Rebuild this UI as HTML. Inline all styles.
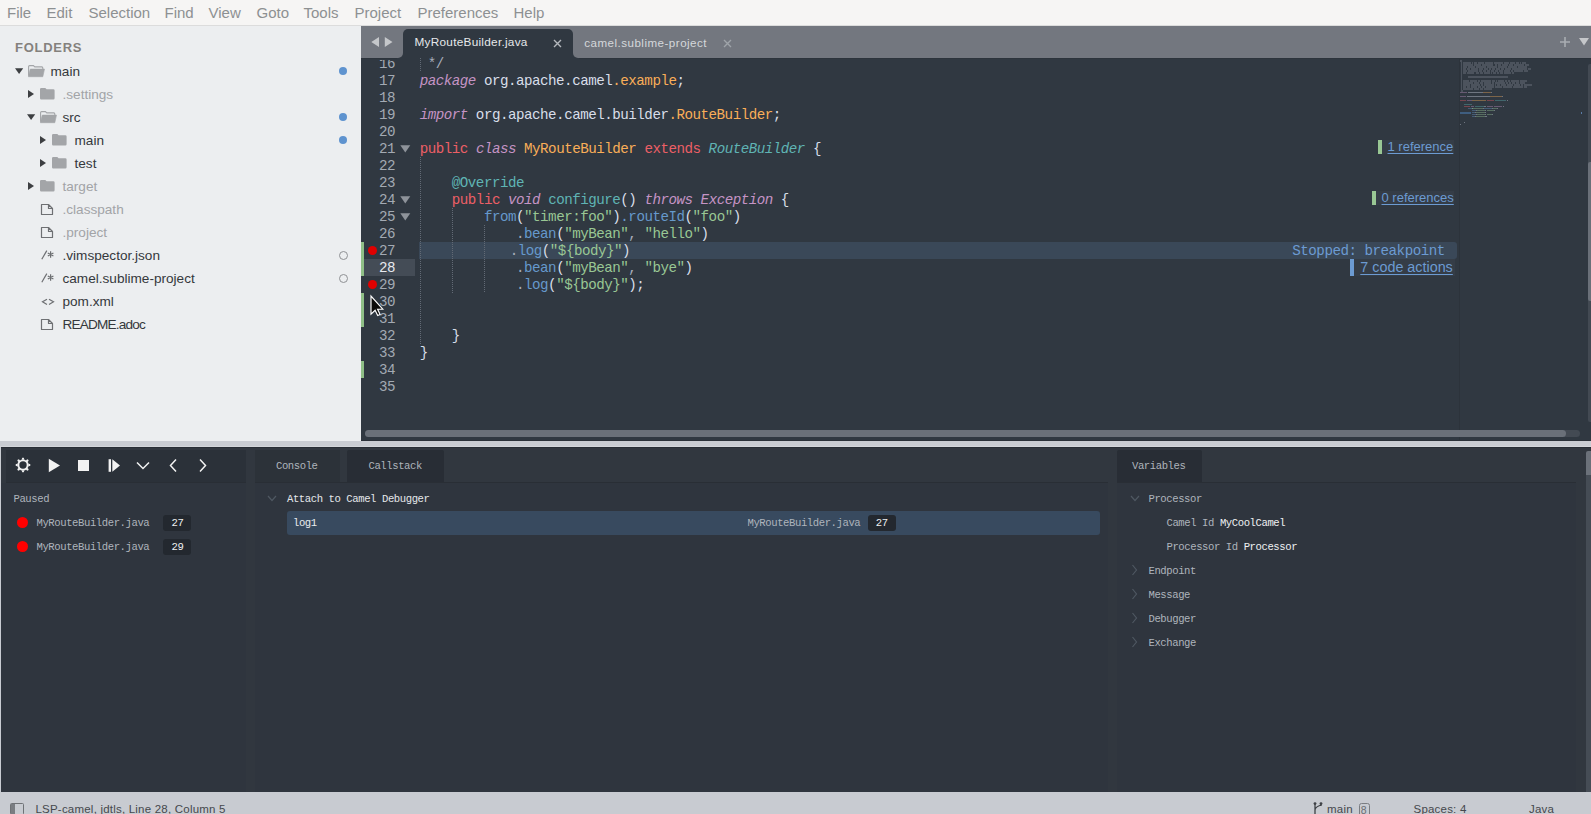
<!DOCTYPE html>
<html><head><meta charset="utf-8">
<style>
*{margin:0;padding:0;box-sizing:border-box}
html,body{width:1591px;height:814px;overflow:hidden;background:#303841;position:relative}
.a{position:absolute}
.s{font-family:"Liberation Sans",sans-serif;white-space:pre}
.m{font-family:"Liberation Mono",monospace;white-space:pre}
.r{color:#ec5f66}.p{color:#c594c5;font-style:italic}.o{color:#f9ae58}.c{color:#5fb4b4}.ci{color:#5fb4b4;font-style:italic}.b{color:#6699cc}.g{color:#99c794}.gr{color:#a6acb9}
</style></head><body>
<div class="a" style="left:0px;top:0px;width:1591px;height:25px;background:#f6f5f4;"></div>
<div class="a" style="left:0px;top:25px;width:1591px;height:1px;background:#dcdcdc;"></div>
<div class="a s" style="left:7px;top:5.10px;font-size:15px;line-height:15px;color:#8d9092;">File</div>
<div class="a s" style="left:46.5px;top:5.10px;font-size:15px;line-height:15px;color:#8d9092;">Edit</div>
<div class="a s" style="left:88.5px;top:5.10px;font-size:15px;line-height:15px;color:#8d9092;">Selection</div>
<div class="a s" style="left:164.5px;top:5.10px;font-size:15px;line-height:15px;color:#8d9092;">Find</div>
<div class="a s" style="left:208.5px;top:5.10px;font-size:15px;line-height:15px;color:#8d9092;">View</div>
<div class="a s" style="left:256.5px;top:5.10px;font-size:15px;line-height:15px;color:#8d9092;">Goto</div>
<div class="a s" style="left:303.5px;top:5.10px;font-size:15px;line-height:15px;color:#8d9092;">Tools</div>
<div class="a s" style="left:354.5px;top:5.10px;font-size:15px;line-height:15px;color:#8d9092;">Project</div>
<div class="a s" style="left:417.5px;top:5.10px;font-size:15px;line-height:15px;color:#8d9092;">Preferences</div>
<div class="a s" style="left:513.5px;top:5.10px;font-size:15px;line-height:15px;color:#8d9092;">Help</div>
<div class="a" style="left:0px;top:26px;width:361px;height:415px;background:#eceef0;"></div>
<div class="a s" style="left:15px;top:41.10px;font-size:13px;line-height:13px;color:#84817d;font-weight:bold;letter-spacing:0.72px">FOLDERS</div>
<svg class="a" style="left:15px;top:67.8px" width="9" height="7" viewBox="0 0 9 7"><path d="M0 0.3H8.2L4.1 6Z" fill="#3d3f42"/></svg>
<svg class="a" style="left:28.2px;top:65.1px" width="18" height="13" viewBox="0 0 18 13"><path d="M0.6 10.8V1.6Q0.6 0.6 1.6 0.6H5.4L6.8 1.9H13.8Q14.8 1.9 14.8 2.9V4.4" fill="none" stroke="#a3a5a8" stroke-width="1.1"/><path d="M2.3 4.1H16.5L14.8 11.7H0.3Z" fill="#a3a5a8" stroke="#a3a5a8" stroke-width="0.6" stroke-linejoin="round"/></svg>
<div class="a s" style="left:50.5px;top:64.69px;font-size:13.6px;line-height:13.6px;color:#35383c;">main</div>
<div class="a" style="left:339px;top:67px;width:8px;height:8px;border-radius:50%;background:#5e93cf"></div>
<svg class="a" style="left:27.9px;top:90px" width="7" height="9" viewBox="0 0 7 9"><path d="M0 0V8.1L6 4.05Z" fill="#3d3f42"/></svg>
<svg class="a" style="left:40.1px;top:88.1px" width="16" height="13" viewBox="0 0 16 13"><path d="M0 1.3Q0 0 1.3 0H5.3L6.6 1.2H13.3Q14.6 1.2 14.6 2.5V10.3Q14.6 11.6 13.3 11.6H1.3Q0 11.6 0 10.3Z" fill="#a3a5a8"/></svg>
<div class="a s" style="left:62.5px;top:87.69px;font-size:13.6px;line-height:13.6px;color:#a2a4a7;">.settings</div>
<svg class="a" style="left:27px;top:113.8px" width="9" height="7" viewBox="0 0 9 7"><path d="M0 0.3H8.2L4.1 6Z" fill="#3d3f42"/></svg>
<svg class="a" style="left:40.2px;top:111.1px" width="18" height="13" viewBox="0 0 18 13"><path d="M0.6 10.8V1.6Q0.6 0.6 1.6 0.6H5.4L6.8 1.9H13.8Q14.8 1.9 14.8 2.9V4.4" fill="none" stroke="#a3a5a8" stroke-width="1.1"/><path d="M2.3 4.1H16.5L14.8 11.7H0.3Z" fill="#a3a5a8" stroke="#a3a5a8" stroke-width="0.6" stroke-linejoin="round"/></svg>
<div class="a s" style="left:62.5px;top:110.69px;font-size:13.6px;line-height:13.6px;color:#35383c;">src</div>
<div class="a" style="left:339px;top:113px;width:8px;height:8px;border-radius:50%;background:#5e93cf"></div>
<svg class="a" style="left:39.9px;top:136px" width="7" height="9" viewBox="0 0 7 9"><path d="M0 0V8.1L6 4.05Z" fill="#3d3f42"/></svg>
<svg class="a" style="left:52.1px;top:134.1px" width="16" height="13" viewBox="0 0 16 13"><path d="M0 1.3Q0 0 1.3 0H5.3L6.6 1.2H13.3Q14.6 1.2 14.6 2.5V10.3Q14.6 11.6 13.3 11.6H1.3Q0 11.6 0 10.3Z" fill="#a3a5a8"/></svg>
<div class="a s" style="left:74.5px;top:133.69px;font-size:13.6px;line-height:13.6px;color:#35383c;">main</div>
<div class="a" style="left:339px;top:136px;width:8px;height:8px;border-radius:50%;background:#5e93cf"></div>
<svg class="a" style="left:39.9px;top:159px" width="7" height="9" viewBox="0 0 7 9"><path d="M0 0V8.1L6 4.05Z" fill="#3d3f42"/></svg>
<svg class="a" style="left:52.1px;top:157.1px" width="16" height="13" viewBox="0 0 16 13"><path d="M0 1.3Q0 0 1.3 0H5.3L6.6 1.2H13.3Q14.6 1.2 14.6 2.5V10.3Q14.6 11.6 13.3 11.6H1.3Q0 11.6 0 10.3Z" fill="#a3a5a8"/></svg>
<div class="a s" style="left:74.5px;top:156.69px;font-size:13.6px;line-height:13.6px;color:#35383c;">test</div>
<svg class="a" style="left:27.9px;top:182px" width="7" height="9" viewBox="0 0 7 9"><path d="M0 0V8.1L6 4.05Z" fill="#3d3f42"/></svg>
<svg class="a" style="left:40.1px;top:180.1px" width="16" height="13" viewBox="0 0 16 13"><path d="M0 1.3Q0 0 1.3 0H5.3L6.6 1.2H13.3Q14.6 1.2 14.6 2.5V10.3Q14.6 11.6 13.3 11.6H1.3Q0 11.6 0 10.3Z" fill="#a3a5a8"/></svg>
<div class="a s" style="left:62.5px;top:179.69px;font-size:13.6px;line-height:13.6px;color:#a2a4a7;">target</div>
<svg class="a" style="left:40px;top:202.5px" width="14" height="13" viewBox="0 0 14 13"><path d="M1.5 1.5H8.5L12.5 5.5V11.5H1.5Z M8.5 1.5V5.5H12.5" fill="none" stroke="#6e7073" stroke-width="1.2" stroke-linejoin="round"/></svg>
<div class="a s" style="left:62.5px;top:202.69px;font-size:13.6px;line-height:13.6px;color:#a2a4a7;">.classpath</div>
<svg class="a" style="left:40px;top:225.5px" width="14" height="13" viewBox="0 0 14 13"><path d="M1.5 1.5H8.5L12.5 5.5V11.5H1.5Z M8.5 1.5V5.5H12.5" fill="none" stroke="#6e7073" stroke-width="1.2" stroke-linejoin="round"/></svg>
<div class="a s" style="left:62.5px;top:225.69px;font-size:13.6px;line-height:13.6px;color:#a2a4a7;">.project</div>
<svg class="a" style="left:40px;top:249px" width="16" height="12" viewBox="0 0 16 12"><path d="M1.8 10.2L6.8 1.6" stroke="#6d6f72" stroke-width="1.2"/><path d="M10.6 2.3V8.7M7.8 3.9L13.4 7.1M7.8 7.1L13.4 3.9" stroke="#6d6f72" stroke-width="1.2"/></svg>
<div class="a s" style="left:62.5px;top:248.69px;font-size:13.6px;line-height:13.6px;color:#35383c;">.vimspector.json</div>
<div class="a" style="left:338.5px;top:250.5px;width:9px;height:9px;border-radius:50%;border:1.2px solid #8f9194"></div>
<svg class="a" style="left:40px;top:272px" width="16" height="12" viewBox="0 0 16 12"><path d="M1.8 10.2L6.8 1.6" stroke="#6d6f72" stroke-width="1.2"/><path d="M10.6 2.3V8.7M7.8 3.9L13.4 7.1M7.8 7.1L13.4 3.9" stroke="#6d6f72" stroke-width="1.2"/></svg>
<div class="a s" style="left:62.5px;top:271.69px;font-size:13.6px;line-height:13.6px;color:#35383c;">camel.sublime-project</div>
<div class="a" style="left:338.5px;top:273.5px;width:9px;height:9px;border-radius:50%;border:1.2px solid #8f9194"></div>
<svg class="a" style="left:40px;top:297px" width="15" height="10" viewBox="0 0 14 10"><path d="M6.5 2.2L2 4.8L6.5 7.4M8.5 2.2L13 4.8L8.5 7.4" fill="none" stroke="#6d6f72" stroke-width="1.2"/></svg>
<div class="a s" style="left:62.5px;top:294.69px;font-size:13.6px;line-height:13.6px;color:#35383c;">pom.xml</div>
<svg class="a" style="left:40px;top:317.5px" width="14" height="13" viewBox="0 0 14 13"><path d="M1.5 1.5H8.5L12.5 5.5V11.5H1.5Z M8.5 1.5V5.5H12.5" fill="none" stroke="#6e7073" stroke-width="1.2" stroke-linejoin="round"/></svg>
<div class="a s" style="left:62.5px;top:317.69px;font-size:13.6px;line-height:13.6px;color:#35383c;letter-spacing:-0.8px">README.adoc</div>
<div class="a" style="left:361px;top:26px;width:1230px;height:32px;background:#73777f;"></div>
<svg class="a" style="left:369px;top:36px" width="26" height="12" viewBox="0 0 26 12"><path d="M10 0.9V11L2.3 5.95Z M15.8 0.9V11L23.5 5.95Z" fill="#c5c7ca"/></svg>
<div class="a" style="left:396px;top:50px;width:7px;height:8px;background:#303841"></div>
<div class="a" style="left:391px;top:45px;width:12px;height:13px;background:#73777f;border-bottom-right-radius:5px"></div>
<div class="a" style="left:573px;top:50px;width:7px;height:8px;background:#303841"></div>
<div class="a" style="left:573px;top:45px;width:12px;height:13px;background:#73777f;border-bottom-left-radius:5px"></div>
<div class="a" style="left:403px;top:29px;width:170px;height:29px;background:#303841;border-radius:5px 5px 0 0"></div>
<div class="a s" style="left:414.5px;top:37.41px;font-size:11.8px;line-height:11.8px;color:#e6e8ea;letter-spacing:0.26px">MyRouteBuilder.java</div>
<svg class="a" style="left:553px;top:39px" width="9" height="9" viewBox="0 0 9 9"><path d="M1 1L8 8M8 1L1 8" stroke="#b4b8bd" stroke-width="1.4"/></svg>
<div class="a s" style="left:584.2px;top:37.18px;font-size:11.6px;line-height:11.6px;color:#d5d8db;letter-spacing:0.48px">camel.sublime-project</div>
<svg class="a" style="left:723px;top:39px" width="9" height="9" viewBox="0 0 9 9"><path d="M1 1L8 8M8 1L1 8" stroke="#9fa4a9" stroke-width="1.4"/></svg>
<svg class="a" style="left:1559px;top:36px" width="32" height="12" viewBox="0 0 32 12"><path d="M1 6H11M6 1V11" stroke="#a9adb2" stroke-width="1.6"/><path d="M20 2H30L25 9.5Z" fill="#c5c7ca"/></svg>
<div class="a" style="left:361px;top:58px;width:1230px;height:383px;background:#303841;"></div>
<div class="a" style="left:364px;top:259px;width:51px;height:17px;background:#444c56;"></div>
<div class="a" style="left:419px;top:242px;width:1038px;height:17px;background:#3a4858;border-radius:0 3px 3px 0"></div>
<div class="a" style="left:361px;top:242px;width:3px;height:34px;background:#8fbf87;"></div>
<div class="a" style="left:361px;top:293px;width:3px;height:34px;background:#8fbf87;"></div>
<div class="a" style="left:361px;top:361px;width:3px;height:17px;background:#8fbf87;"></div>
<div class="a" style="left:420px;top:58px;width:1px;height:14px;background:repeating-linear-gradient(to bottom,#626a75 0 1px,transparent 1px 2px)"></div>
<div class="a" style="left:420px;top:157px;width:1px;height:187px;background:repeating-linear-gradient(to bottom,#626a75 0 1px,transparent 1px 2px)"></div>
<div class="a" style="left:452px;top:208px;width:1px;height:85px;background:repeating-linear-gradient(to bottom,#626a75 0 1px,transparent 1px 2px)"></div>
<div class="a" style="left:484px;top:225px;width:1px;height:68px;background:repeating-linear-gradient(to bottom,#626a75 0 1px,transparent 1px 2px)"></div>
<div class="a m" style="left:363px;top:57.02px;width:32px;text-align:right;font-size:14.2px;line-height:14.2px;letter-spacing:-0.490px;color:#a3aab3">16</div>
<div class="a m" style="left:419.7px;top:57.02px;font-size:14.2px;line-height:14.2px;letter-spacing:-0.490px;color:#d8dee9"><span class="gr"> */</span></div>
<div class="a m" style="left:363px;top:74.02px;width:32px;text-align:right;font-size:14.2px;line-height:14.2px;letter-spacing:-0.490px;color:#a3aab3">17</div>
<div class="a m" style="left:419.7px;top:74.02px;font-size:14.2px;line-height:14.2px;letter-spacing:-0.490px;color:#d8dee9"><span class="p">package</span> org.apache.camel<span class="o">.example</span>;</div>
<div class="a m" style="left:363px;top:91.02px;width:32px;text-align:right;font-size:14.2px;line-height:14.2px;letter-spacing:-0.490px;color:#a3aab3">18</div>
<div class="a m" style="left:363px;top:108.02px;width:32px;text-align:right;font-size:14.2px;line-height:14.2px;letter-spacing:-0.490px;color:#a3aab3">19</div>
<div class="a m" style="left:419.7px;top:108.02px;font-size:14.2px;line-height:14.2px;letter-spacing:-0.490px;color:#d8dee9"><span class="p">import</span> org.apache.camel.builder<span class="o">.RouteBuilder</span>;</div>
<div class="a m" style="left:363px;top:125.02px;width:32px;text-align:right;font-size:14.2px;line-height:14.2px;letter-spacing:-0.490px;color:#a3aab3">20</div>
<div class="a m" style="left:363px;top:142.02px;width:32px;text-align:right;font-size:14.2px;line-height:14.2px;letter-spacing:-0.490px;color:#a3aab3">21</div>
<div class="a m" style="left:419.7px;top:142.02px;font-size:14.2px;line-height:14.2px;letter-spacing:-0.490px;color:#d8dee9"><span class="r">public</span> <span class="p">class</span> <span class="o">MyRouteBuilder</span> <span class="r">extends</span> <span class="ci">RouteBuilder</span> {</div>
<div class="a m" style="left:363px;top:159.02px;width:32px;text-align:right;font-size:14.2px;line-height:14.2px;letter-spacing:-0.490px;color:#a3aab3">22</div>
<div class="a m" style="left:363px;top:176.02px;width:32px;text-align:right;font-size:14.2px;line-height:14.2px;letter-spacing:-0.490px;color:#a3aab3">23</div>
<div class="a m" style="left:419.7px;top:176.02px;font-size:14.2px;line-height:14.2px;letter-spacing:-0.490px;color:#d8dee9">    <span class="c">@Override</span></div>
<div class="a m" style="left:363px;top:193.02px;width:32px;text-align:right;font-size:14.2px;line-height:14.2px;letter-spacing:-0.490px;color:#a3aab3">24</div>
<div class="a m" style="left:419.7px;top:193.02px;font-size:14.2px;line-height:14.2px;letter-spacing:-0.490px;color:#d8dee9">    <span class="r">public</span> <span class="p">void</span> <span class="c">configure</span>() <span class="p">throws</span> <span class="p">Exception</span> {</div>
<div class="a m" style="left:363px;top:210.02px;width:32px;text-align:right;font-size:14.2px;line-height:14.2px;letter-spacing:-0.490px;color:#a3aab3">25</div>
<div class="a m" style="left:419.7px;top:210.02px;font-size:14.2px;line-height:14.2px;letter-spacing:-0.490px;color:#d8dee9">        <span class="b">from</span>(<span class="g">"timer:foo"</span>)<span class="b">.routeId</span>(<span class="g">"foo"</span>)</div>
<div class="a m" style="left:363px;top:227.02px;width:32px;text-align:right;font-size:14.2px;line-height:14.2px;letter-spacing:-0.490px;color:#a3aab3">26</div>
<div class="a m" style="left:419.7px;top:227.02px;font-size:14.2px;line-height:14.2px;letter-spacing:-0.490px;color:#d8dee9">            <span class="gr">.</span><span class="b">bean</span>(<span class="g">"myBean"</span><span class="gr">,</span> <span class="g">"hello"</span>)</div>
<div class="a m" style="left:363px;top:244.02px;width:32px;text-align:right;font-size:14.2px;line-height:14.2px;letter-spacing:-0.490px;color:#a3aab3">27</div>
<div class="a m" style="left:509.7px;top:244.02px;font-size:14.2px;line-height:14.2px;letter-spacing:-0.490px;color:#d8dee9"><span class="gr">.</span><span class="b">log</span>(<span class="g">"${body}"</span>)</div>
<div class="a m" style="left:363px;top:261.02px;width:32px;text-align:right;font-size:14.2px;line-height:14.2px;letter-spacing:-0.490px;color:#e6e9ee">28</div>
<div class="a m" style="left:419.7px;top:261.02px;font-size:14.2px;line-height:14.2px;letter-spacing:-0.490px;color:#d8dee9">            <span class="gr">.</span><span class="b">bean</span>(<span class="g">"myBean"</span><span class="gr">,</span> <span class="g">"bye"</span>)</div>
<div class="a m" style="left:363px;top:278.02px;width:32px;text-align:right;font-size:14.2px;line-height:14.2px;letter-spacing:-0.490px;color:#a3aab3">29</div>
<div class="a m" style="left:419.7px;top:278.02px;font-size:14.2px;line-height:14.2px;letter-spacing:-0.490px;color:#d8dee9">            <span class="gr">.</span><span class="b">log</span>(<span class="g">"${body}"</span>);</div>
<div class="a m" style="left:363px;top:295.02px;width:32px;text-align:right;font-size:14.2px;line-height:14.2px;letter-spacing:-0.490px;color:#a3aab3">30</div>
<div class="a m" style="left:363px;top:312.02px;width:32px;text-align:right;font-size:14.2px;line-height:14.2px;letter-spacing:-0.490px;color:#a3aab3">31</div>
<div class="a m" style="left:363px;top:329.02px;width:32px;text-align:right;font-size:14.2px;line-height:14.2px;letter-spacing:-0.490px;color:#a3aab3">32</div>
<div class="a m" style="left:419.7px;top:329.02px;font-size:14.2px;line-height:14.2px;letter-spacing:-0.490px;color:#d8dee9">    }</div>
<div class="a m" style="left:363px;top:346.02px;width:32px;text-align:right;font-size:14.2px;line-height:14.2px;letter-spacing:-0.490px;color:#a3aab3">33</div>
<div class="a m" style="left:419.7px;top:346.02px;font-size:14.2px;line-height:14.2px;letter-spacing:-0.490px;color:#d8dee9">}</div>
<div class="a m" style="left:363px;top:363.02px;width:32px;text-align:right;font-size:14.2px;line-height:14.2px;letter-spacing:-0.490px;color:#a3aab3">34</div>
<div class="a m" style="left:363px;top:380.02px;width:32px;text-align:right;font-size:14.2px;line-height:14.2px;letter-spacing:-0.490px;color:#a3aab3">35</div>
<div class="a" style="left:363px;top:58px;width:33px;height:2px;background:#303841;"></div>
<svg class="a" style="left:400px;top:145px" width="11" height="8" viewBox="0 0 11 8"><path d="M0.3 0.3H10.3L5.3 7.5Z" fill="#8e939a"/></svg>
<svg class="a" style="left:400px;top:196px" width="11" height="8" viewBox="0 0 11 8"><path d="M0.3 0.3H10.3L5.3 7.5Z" fill="#8e939a"/></svg>
<svg class="a" style="left:400px;top:213px" width="11" height="8" viewBox="0 0 11 8"><path d="M0.3 0.3H10.3L5.3 7.5Z" fill="#8e939a"/></svg>
<div class="a" style="left:367.8px;top:246.0px;width:9px;height:9px;border-radius:50%;background:#e00000"></div>
<div class="a" style="left:367.8px;top:280.0px;width:9px;height:9px;border-radius:50%;background:#e00000"></div>
<div class="a" style="left:1382px;top:140px;width:72px;height:14px;background:#353d47;"></div>
<div class="a" style="left:1378px;top:140px;width:4px;height:14px;background:#99c794;"></div>
<div class="a s" style="left:1387.5px;top:139.60px;font-size:13px;line-height:13px;color:#6c9bd2;text-decoration:underline;text-underline-offset:1.5px">1 reference</div>
<div class="a" style="left:1376px;top:191px;width:78px;height:14px;background:#353d47;"></div>
<div class="a" style="left:1372px;top:191px;width:4px;height:14px;background:#99c794;"></div>
<div class="a s" style="left:1381.5px;top:190.60px;font-size:13px;line-height:13px;color:#6c9bd2;text-decoration:underline;text-underline-offset:1.5px">0 references</div>
<div class="a m" style="left:1292.3px;top:243.92px;font-size:14.2px;line-height:14.2px;color:#6c9bd2;letter-spacing:-0.490px">Stopped: breakpoint</div>
<div class="a" style="left:1354px;top:259px;width:101px;height:17px;background:#353d47;"></div>
<div class="a" style="left:1350px;top:259px;width:4px;height:17px;background:#6c9bd2;"></div>
<div class="a s" style="left:1360.3px;top:260.15px;font-size:14.35px;line-height:14.35px;color:#6c9bd2;text-decoration:underline;text-underline-offset:2px">7 code actions</div>
<div class="a" style="left:1460.00px;top:60.1px;width:1.92px;height:1.5px;background:#a6acb9;opacity:0.24"></div>
<div class="a" style="left:1460.96px;top:62.1px;width:0.96px;height:1.5px;background:#a6acb9;opacity:0.24"></div>
<div class="a" style="left:1462.88px;top:62.1px;width:7.68px;height:1.5px;background:#a6acb9;opacity:0.24"></div>
<div class="a" style="left:1471.52px;top:62.1px;width:1.92px;height:1.5px;background:#a6acb9;opacity:0.24"></div>
<div class="a" style="left:1474.40px;top:62.1px;width:2.88px;height:1.5px;background:#a6acb9;opacity:0.24"></div>
<div class="a" style="left:1478.24px;top:62.1px;width:5.76px;height:1.5px;background:#a6acb9;opacity:0.24"></div>
<div class="a" style="left:1484.96px;top:62.1px;width:7.68px;height:1.5px;background:#a6acb9;opacity:0.24"></div>
<div class="a" style="left:1493.60px;top:62.1px;width:9.60px;height:1.5px;background:#a6acb9;opacity:0.24"></div>
<div class="a" style="left:1504.16px;top:62.1px;width:4.80px;height:1.5px;background:#a6acb9;opacity:0.24"></div>
<div class="a" style="left:1509.92px;top:62.1px;width:4.80px;height:1.5px;background:#a6acb9;opacity:0.24"></div>
<div class="a" style="left:1515.68px;top:62.1px;width:2.88px;height:1.5px;background:#a6acb9;opacity:0.24"></div>
<div class="a" style="left:1519.52px;top:62.1px;width:1.92px;height:1.5px;background:#a6acb9;opacity:0.24"></div>
<div class="a" style="left:1522.40px;top:62.1px;width:3.84px;height:1.5px;background:#a6acb9;opacity:0.24"></div>
<div class="a" style="left:1460.96px;top:64.1px;width:0.96px;height:1.5px;background:#a6acb9;opacity:0.24"></div>
<div class="a" style="left:1462.88px;top:64.1px;width:10.56px;height:1.5px;background:#a6acb9;opacity:0.24"></div>
<div class="a" style="left:1474.40px;top:64.1px;width:6.72px;height:1.5px;background:#a6acb9;opacity:0.24"></div>
<div class="a" style="left:1482.08px;top:64.1px;width:10.56px;height:1.5px;background:#a6acb9;opacity:0.24"></div>
<div class="a" style="left:1494.56px;top:64.1px;width:2.88px;height:1.5px;background:#a6acb9;opacity:0.24"></div>
<div class="a" style="left:1498.40px;top:64.1px;width:2.88px;height:1.5px;background:#a6acb9;opacity:0.24"></div>
<div class="a" style="left:1502.24px;top:64.1px;width:5.76px;height:1.5px;background:#a6acb9;opacity:0.24"></div>
<div class="a" style="left:1508.96px;top:64.1px;width:3.84px;height:1.5px;background:#a6acb9;opacity:0.24"></div>
<div class="a" style="left:1513.76px;top:64.1px;width:10.56px;height:1.5px;background:#a6acb9;opacity:0.24"></div>
<div class="a" style="left:1525.28px;top:64.1px;width:3.84px;height:1.5px;background:#a6acb9;opacity:0.24"></div>
<div class="a" style="left:1460.96px;top:66.1px;width:0.96px;height:1.5px;background:#a6acb9;opacity:0.24"></div>
<div class="a" style="left:1462.88px;top:66.1px;width:3.84px;height:1.5px;background:#a6acb9;opacity:0.24"></div>
<div class="a" style="left:1467.68px;top:66.1px;width:3.84px;height:1.5px;background:#a6acb9;opacity:0.24"></div>
<div class="a" style="left:1472.48px;top:66.1px;width:2.88px;height:1.5px;background:#a6acb9;opacity:0.24"></div>
<div class="a" style="left:1476.32px;top:66.1px;width:9.60px;height:1.5px;background:#a6acb9;opacity:0.24"></div>
<div class="a" style="left:1486.88px;top:66.1px;width:10.56px;height:1.5px;background:#a6acb9;opacity:0.24"></div>
<div class="a" style="left:1498.40px;top:66.1px;width:8.64px;height:1.5px;background:#a6acb9;opacity:0.24"></div>
<div class="a" style="left:1508.00px;top:66.1px;width:8.64px;height:1.5px;background:#a6acb9;opacity:0.24"></div>
<div class="a" style="left:1517.60px;top:66.1px;width:9.60px;height:1.5px;background:#a6acb9;opacity:0.24"></div>
<div class="a" style="left:1460.96px;top:68.1px;width:0.96px;height:1.5px;background:#a6acb9;opacity:0.24"></div>
<div class="a" style="left:1462.88px;top:68.1px;width:2.88px;height:1.5px;background:#a6acb9;opacity:0.24"></div>
<div class="a" style="left:1466.72px;top:68.1px;width:2.88px;height:1.5px;background:#a6acb9;opacity:0.24"></div>
<div class="a" style="left:1470.56px;top:68.1px;width:7.68px;height:1.5px;background:#a6acb9;opacity:0.24"></div>
<div class="a" style="left:1479.20px;top:68.1px;width:3.84px;height:1.5px;background:#a6acb9;opacity:0.24"></div>
<div class="a" style="left:1484.00px;top:68.1px;width:3.84px;height:1.5px;background:#a6acb9;opacity:0.24"></div>
<div class="a" style="left:1488.80px;top:68.1px;width:1.92px;height:1.5px;background:#a6acb9;opacity:0.24"></div>
<div class="a" style="left:1491.68px;top:68.1px;width:2.88px;height:1.5px;background:#a6acb9;opacity:0.24"></div>
<div class="a" style="left:1495.52px;top:68.1px;width:4.80px;height:1.5px;background:#a6acb9;opacity:0.24"></div>
<div class="a" style="left:1501.28px;top:68.1px;width:2.88px;height:1.5px;background:#a6acb9;opacity:0.24"></div>
<div class="a" style="left:1505.12px;top:68.1px;width:5.76px;height:1.5px;background:#a6acb9;opacity:0.24"></div>
<div class="a" style="left:1511.84px;top:68.1px;width:7.68px;height:1.5px;background:#a6acb9;opacity:0.24"></div>
<div class="a" style="left:1520.48px;top:68.1px;width:6.72px;height:1.5px;background:#a6acb9;opacity:0.24"></div>
<div class="a" style="left:1528.16px;top:68.1px;width:2.88px;height:1.5px;background:#a6acb9;opacity:0.24"></div>
<div class="a" style="left:1460.96px;top:70.1px;width:0.96px;height:1.5px;background:#a6acb9;opacity:0.24"></div>
<div class="a" style="left:1462.88px;top:70.1px;width:3.84px;height:1.5px;background:#a6acb9;opacity:0.24"></div>
<div class="a" style="left:1467.68px;top:70.1px;width:10.56px;height:1.5px;background:#a6acb9;opacity:0.24"></div>
<div class="a" style="left:1479.20px;top:70.1px;width:2.88px;height:1.5px;background:#a6acb9;opacity:0.24"></div>
<div class="a" style="left:1483.04px;top:70.1px;width:2.88px;height:1.5px;background:#a6acb9;opacity:0.24"></div>
<div class="a" style="left:1486.88px;top:70.1px;width:2.88px;height:1.5px;background:#a6acb9;opacity:0.24"></div>
<div class="a" style="left:1490.72px;top:70.1px;width:2.88px;height:1.5px;background:#a6acb9;opacity:0.24"></div>
<div class="a" style="left:1494.56px;top:70.1px;width:3.84px;height:1.5px;background:#a6acb9;opacity:0.24"></div>
<div class="a" style="left:1499.36px;top:70.1px;width:3.84px;height:1.5px;background:#a6acb9;opacity:0.24"></div>
<div class="a" style="left:1504.16px;top:70.1px;width:5.76px;height:1.5px;background:#a6acb9;opacity:0.24"></div>
<div class="a" style="left:1510.88px;top:70.1px;width:1.92px;height:1.5px;background:#a6acb9;opacity:0.24"></div>
<div class="a" style="left:1513.76px;top:70.1px;width:9.60px;height:1.5px;background:#a6acb9;opacity:0.24"></div>
<div class="a" style="left:1524.32px;top:70.1px;width:3.84px;height:1.5px;background:#a6acb9;opacity:0.24"></div>
<div class="a" style="left:1460.96px;top:72.1px;width:0.96px;height:1.5px;background:#a6acb9;opacity:0.24"></div>
<div class="a" style="left:1462.88px;top:72.1px;width:2.88px;height:1.5px;background:#a6acb9;opacity:0.24"></div>
<div class="a" style="left:1466.72px;top:72.1px;width:7.68px;height:1.5px;background:#a6acb9;opacity:0.24"></div>
<div class="a" style="left:1476.32px;top:72.1px;width:2.88px;height:1.5px;background:#a6acb9;opacity:0.24"></div>
<div class="a" style="left:1480.16px;top:72.1px;width:2.88px;height:1.5px;background:#a6acb9;opacity:0.24"></div>
<div class="a" style="left:1484.00px;top:72.1px;width:5.76px;height:1.5px;background:#a6acb9;opacity:0.24"></div>
<div class="a" style="left:1490.72px;top:72.1px;width:0.96px;height:1.5px;background:#a6acb9;opacity:0.24"></div>
<div class="a" style="left:1492.64px;top:72.1px;width:3.84px;height:1.5px;background:#a6acb9;opacity:0.24"></div>
<div class="a" style="left:1497.44px;top:72.1px;width:1.92px;height:1.5px;background:#a6acb9;opacity:0.24"></div>
<div class="a" style="left:1500.32px;top:72.1px;width:2.88px;height:1.5px;background:#a6acb9;opacity:0.24"></div>
<div class="a" style="left:1504.16px;top:72.1px;width:6.72px;height:1.5px;background:#a6acb9;opacity:0.24"></div>
<div class="a" style="left:1511.84px;top:72.1px;width:1.92px;height:1.5px;background:#a6acb9;opacity:0.24"></div>
<div class="a" style="left:1460.96px;top:74.1px;width:0.96px;height:1.5px;background:#a6acb9;opacity:0.24"></div>
<div class="a" style="left:1460.96px;top:76.1px;width:0.96px;height:1.5px;background:#a6acb9;opacity:0.24"></div>
<div class="a" style="left:1467.68px;top:76.1px;width:40.32px;height:1.5px;background:#a6acb9;opacity:0.24"></div>
<div class="a" style="left:1460.96px;top:78.1px;width:0.96px;height:1.5px;background:#a6acb9;opacity:0.24"></div>
<div class="a" style="left:1460.96px;top:80.1px;width:0.96px;height:1.5px;background:#a6acb9;opacity:0.24"></div>
<div class="a" style="left:1462.88px;top:80.1px;width:5.76px;height:1.5px;background:#a6acb9;opacity:0.24"></div>
<div class="a" style="left:1469.60px;top:80.1px;width:7.68px;height:1.5px;background:#a6acb9;opacity:0.24"></div>
<div class="a" style="left:1478.24px;top:80.1px;width:1.92px;height:1.5px;background:#a6acb9;opacity:0.24"></div>
<div class="a" style="left:1481.12px;top:80.1px;width:9.60px;height:1.5px;background:#a6acb9;opacity:0.24"></div>
<div class="a" style="left:1491.68px;top:80.1px;width:2.88px;height:1.5px;background:#a6acb9;opacity:0.24"></div>
<div class="a" style="left:1495.52px;top:80.1px;width:1.92px;height:1.5px;background:#a6acb9;opacity:0.24"></div>
<div class="a" style="left:1498.40px;top:80.1px;width:5.76px;height:1.5px;background:#a6acb9;opacity:0.24"></div>
<div class="a" style="left:1505.12px;top:80.1px;width:1.92px;height:1.5px;background:#a6acb9;opacity:0.24"></div>
<div class="a" style="left:1508.00px;top:80.1px;width:1.92px;height:1.5px;background:#a6acb9;opacity:0.24"></div>
<div class="a" style="left:1510.88px;top:80.1px;width:7.68px;height:1.5px;background:#a6acb9;opacity:0.24"></div>
<div class="a" style="left:1519.52px;top:80.1px;width:7.68px;height:1.5px;background:#a6acb9;opacity:0.24"></div>
<div class="a" style="left:1460.96px;top:82.1px;width:0.96px;height:1.5px;background:#a6acb9;opacity:0.24"></div>
<div class="a" style="left:1462.88px;top:82.1px;width:10.56px;height:1.5px;background:#a6acb9;opacity:0.24"></div>
<div class="a" style="left:1474.40px;top:82.1px;width:4.80px;height:1.5px;background:#a6acb9;opacity:0.24"></div>
<div class="a" style="left:1480.16px;top:82.1px;width:2.88px;height:1.5px;background:#a6acb9;opacity:0.24"></div>
<div class="a" style="left:1484.00px;top:82.1px;width:6.72px;height:1.5px;background:#a6acb9;opacity:0.24"></div>
<div class="a" style="left:1491.68px;top:82.1px;width:1.92px;height:1.5px;background:#a6acb9;opacity:0.24"></div>
<div class="a" style="left:1494.56px;top:82.1px;width:10.56px;height:1.5px;background:#a6acb9;opacity:0.24"></div>
<div class="a" style="left:1506.08px;top:82.1px;width:1.92px;height:1.5px;background:#a6acb9;opacity:0.24"></div>
<div class="a" style="left:1508.96px;top:82.1px;width:1.92px;height:1.5px;background:#a6acb9;opacity:0.24"></div>
<div class="a" style="left:1511.84px;top:82.1px;width:2.88px;height:1.5px;background:#a6acb9;opacity:0.24"></div>
<div class="a" style="left:1515.68px;top:82.1px;width:2.88px;height:1.5px;background:#a6acb9;opacity:0.24"></div>
<div class="a" style="left:1519.52px;top:82.1px;width:5.76px;height:1.5px;background:#a6acb9;opacity:0.24"></div>
<div class="a" style="left:1460.96px;top:84.1px;width:0.96px;height:1.5px;background:#a6acb9;opacity:0.24"></div>
<div class="a" style="left:1462.88px;top:84.1px;width:6.72px;height:1.5px;background:#a6acb9;opacity:0.24"></div>
<div class="a" style="left:1470.56px;top:84.1px;width:9.60px;height:1.5px;background:#a6acb9;opacity:0.24"></div>
<div class="a" style="left:1481.12px;top:84.1px;width:1.92px;height:1.5px;background:#a6acb9;opacity:0.24"></div>
<div class="a" style="left:1484.00px;top:84.1px;width:9.60px;height:1.5px;background:#a6acb9;opacity:0.24"></div>
<div class="a" style="left:1494.56px;top:84.1px;width:1.92px;height:1.5px;background:#a6acb9;opacity:0.24"></div>
<div class="a" style="left:1497.44px;top:84.1px;width:2.88px;height:1.5px;background:#a6acb9;opacity:0.24"></div>
<div class="a" style="left:1501.28px;top:84.1px;width:4.80px;height:1.5px;background:#a6acb9;opacity:0.24"></div>
<div class="a" style="left:1507.04px;top:84.1px;width:5.76px;height:1.5px;background:#a6acb9;opacity:0.24"></div>
<div class="a" style="left:1513.76px;top:84.1px;width:6.72px;height:1.5px;background:#a6acb9;opacity:0.24"></div>
<div class="a" style="left:1521.44px;top:84.1px;width:1.92px;height:1.5px;background:#a6acb9;opacity:0.24"></div>
<div class="a" style="left:1524.32px;top:84.1px;width:7.68px;height:1.5px;background:#a6acb9;opacity:0.24"></div>
<div class="a" style="left:1460.96px;top:86.1px;width:0.96px;height:1.5px;background:#a6acb9;opacity:0.24"></div>
<div class="a" style="left:1462.88px;top:86.1px;width:2.88px;height:1.5px;background:#a6acb9;opacity:0.24"></div>
<div class="a" style="left:1466.72px;top:86.1px;width:2.88px;height:1.5px;background:#a6acb9;opacity:0.24"></div>
<div class="a" style="left:1470.56px;top:86.1px;width:6.72px;height:1.5px;background:#a6acb9;opacity:0.24"></div>
<div class="a" style="left:1478.24px;top:86.1px;width:2.88px;height:1.5px;background:#a6acb9;opacity:0.24"></div>
<div class="a" style="left:1482.08px;top:86.1px;width:2.88px;height:1.5px;background:#a6acb9;opacity:0.24"></div>
<div class="a" style="left:1485.92px;top:86.1px;width:7.68px;height:1.5px;background:#a6acb9;opacity:0.24"></div>
<div class="a" style="left:1494.56px;top:86.1px;width:7.68px;height:1.5px;background:#a6acb9;opacity:0.24"></div>
<div class="a" style="left:1503.20px;top:86.1px;width:8.64px;height:1.5px;background:#a6acb9;opacity:0.24"></div>
<div class="a" style="left:1512.80px;top:86.1px;width:10.56px;height:1.5px;background:#a6acb9;opacity:0.24"></div>
<div class="a" style="left:1524.32px;top:86.1px;width:2.88px;height:1.5px;background:#a6acb9;opacity:0.24"></div>
<div class="a" style="left:1460.96px;top:88.1px;width:0.96px;height:1.5px;background:#a6acb9;opacity:0.24"></div>
<div class="a" style="left:1462.88px;top:88.1px;width:10.56px;height:1.5px;background:#a6acb9;opacity:0.24"></div>
<div class="a" style="left:1474.40px;top:88.1px;width:4.80px;height:1.5px;background:#a6acb9;opacity:0.24"></div>
<div class="a" style="left:1480.16px;top:88.1px;width:2.88px;height:1.5px;background:#a6acb9;opacity:0.24"></div>
<div class="a" style="left:1484.00px;top:88.1px;width:7.68px;height:1.5px;background:#a6acb9;opacity:0.24"></div>
<div class="a" style="left:1460.96px;top:90.1px;width:1.92px;height:1.5px;background:#a6acb9;opacity:0.24"></div>
<div class="a" style="left:1460px;top:111.8px;width:11px;height:2px;background:#3f5e80;"></div>
<div class="a" style="left:1460.00px;top:92.1px;width:6.72px;height:1.4px;background:#c594c5;opacity:0.38"></div>
<div class="a" style="left:1467.68px;top:92.1px;width:15.36px;height:1.4px;background:#d8dee9;opacity:0.38"></div>
<div class="a" style="left:1483.04px;top:92.1px;width:7.68px;height:1.4px;background:#f9ae58;opacity:0.38"></div>
<div class="a" style="left:1490.72px;top:92.1px;width:0.96px;height:1.4px;background:#d8dee9;opacity:0.38"></div>
<div class="a" style="left:1460.00px;top:96.1px;width:5.76px;height:1.4px;background:#c594c5;opacity:0.38"></div>
<div class="a" style="left:1466.72px;top:96.1px;width:23.04px;height:1.4px;background:#d8dee9;opacity:0.38"></div>
<div class="a" style="left:1489.76px;top:96.1px;width:12.48px;height:1.4px;background:#f9ae58;opacity:0.38"></div>
<div class="a" style="left:1502.24px;top:96.1px;width:0.96px;height:1.4px;background:#d8dee9;opacity:0.38"></div>
<div class="a" style="left:1460.00px;top:100.1px;width:5.76px;height:1.4px;background:#ec5f66;opacity:0.38"></div>
<div class="a" style="left:1466.72px;top:100.1px;width:4.80px;height:1.4px;background:#c594c5;opacity:0.38"></div>
<div class="a" style="left:1472.48px;top:100.1px;width:13.44px;height:1.4px;background:#f9ae58;opacity:0.38"></div>
<div class="a" style="left:1486.88px;top:100.1px;width:6.72px;height:1.4px;background:#ec5f66;opacity:0.38"></div>
<div class="a" style="left:1494.56px;top:100.1px;width:11.52px;height:1.4px;background:#5fb4b4;opacity:0.38"></div>
<div class="a" style="left:1507.04px;top:100.1px;width:0.96px;height:1.4px;background:#d8dee9;opacity:0.38"></div>
<div class="a" style="left:1463.84px;top:104.1px;width:8.64px;height:1.4px;background:#5fb4b4;opacity:0.38"></div>
<div class="a" style="left:1463.84px;top:106.1px;width:5.76px;height:1.4px;background:#ec5f66;opacity:0.38"></div>
<div class="a" style="left:1470.56px;top:106.1px;width:3.84px;height:1.4px;background:#c594c5;opacity:0.38"></div>
<div class="a" style="left:1475.36px;top:106.1px;width:8.64px;height:1.4px;background:#5fb4b4;opacity:0.38"></div>
<div class="a" style="left:1484.00px;top:106.1px;width:1.92px;height:1.4px;background:#d8dee9;opacity:0.38"></div>
<div class="a" style="left:1486.88px;top:106.1px;width:5.76px;height:1.4px;background:#c594c5;opacity:0.38"></div>
<div class="a" style="left:1493.60px;top:106.1px;width:8.64px;height:1.4px;background:#c594c5;opacity:0.38"></div>
<div class="a" style="left:1503.20px;top:106.1px;width:0.96px;height:1.4px;background:#d8dee9;opacity:0.38"></div>
<div class="a" style="left:1467.68px;top:108.1px;width:3.84px;height:1.4px;background:#6699cc;opacity:0.38"></div>
<div class="a" style="left:1471.52px;top:108.1px;width:0.96px;height:1.4px;background:#d8dee9;opacity:0.38"></div>
<div class="a" style="left:1472.48px;top:108.1px;width:10.56px;height:1.4px;background:#99c794;opacity:0.38"></div>
<div class="a" style="left:1483.04px;top:108.1px;width:0.96px;height:1.4px;background:#d8dee9;opacity:0.38"></div>
<div class="a" style="left:1484.00px;top:108.1px;width:7.68px;height:1.4px;background:#6699cc;opacity:0.38"></div>
<div class="a" style="left:1491.68px;top:108.1px;width:0.96px;height:1.4px;background:#d8dee9;opacity:0.38"></div>
<div class="a" style="left:1492.64px;top:108.1px;width:4.80px;height:1.4px;background:#99c794;opacity:0.38"></div>
<div class="a" style="left:1497.44px;top:108.1px;width:0.96px;height:1.4px;background:#d8dee9;opacity:0.38"></div>
<div class="a" style="left:1471.52px;top:110.1px;width:4.80px;height:1.4px;background:#6699cc;opacity:0.38"></div>
<div class="a" style="left:1476.32px;top:110.1px;width:0.96px;height:1.4px;background:#d8dee9;opacity:0.38"></div>
<div class="a" style="left:1477.28px;top:110.1px;width:7.68px;height:1.4px;background:#99c794;opacity:0.38"></div>
<div class="a" style="left:1484.96px;top:110.1px;width:0.96px;height:1.4px;background:#d8dee9;opacity:0.38"></div>
<div class="a" style="left:1486.88px;top:110.1px;width:6.72px;height:1.4px;background:#99c794;opacity:0.38"></div>
<div class="a" style="left:1493.60px;top:110.1px;width:0.96px;height:1.4px;background:#d8dee9;opacity:0.38"></div>
<div class="a" style="left:1471.52px;top:112.1px;width:3.84px;height:1.4px;background:#6699cc;opacity:0.38"></div>
<div class="a" style="left:1475.36px;top:112.1px;width:0.96px;height:1.4px;background:#d8dee9;opacity:0.38"></div>
<div class="a" style="left:1476.32px;top:112.1px;width:8.64px;height:1.4px;background:#99c794;opacity:0.38"></div>
<div class="a" style="left:1484.96px;top:112.1px;width:0.96px;height:1.4px;background:#d8dee9;opacity:0.38"></div>
<div class="a" style="left:1471.52px;top:114.1px;width:4.80px;height:1.4px;background:#6699cc;opacity:0.38"></div>
<div class="a" style="left:1476.32px;top:114.1px;width:0.96px;height:1.4px;background:#d8dee9;opacity:0.38"></div>
<div class="a" style="left:1477.28px;top:114.1px;width:7.68px;height:1.4px;background:#99c794;opacity:0.38"></div>
<div class="a" style="left:1484.96px;top:114.1px;width:0.96px;height:1.4px;background:#d8dee9;opacity:0.38"></div>
<div class="a" style="left:1486.88px;top:114.1px;width:4.80px;height:1.4px;background:#99c794;opacity:0.38"></div>
<div class="a" style="left:1491.68px;top:114.1px;width:0.96px;height:1.4px;background:#d8dee9;opacity:0.38"></div>
<div class="a" style="left:1471.52px;top:116.1px;width:3.84px;height:1.4px;background:#6699cc;opacity:0.38"></div>
<div class="a" style="left:1475.36px;top:116.1px;width:0.96px;height:1.4px;background:#d8dee9;opacity:0.38"></div>
<div class="a" style="left:1476.32px;top:116.1px;width:8.64px;height:1.4px;background:#99c794;opacity:0.38"></div>
<div class="a" style="left:1484.96px;top:116.1px;width:1.92px;height:1.4px;background:#d8dee9;opacity:0.38"></div>
<div class="a" style="left:1463.84px;top:122.1px;width:0.96px;height:1.4px;background:#d8dee9;opacity:0.38"></div>
<div class="a" style="left:1460.00px;top:124.1px;width:0.96px;height:1.4px;background:#d8dee9;opacity:0.38"></div>
<div class="a" style="left:1581px;top:111.6px;width:1px;height:2px;background:#5a7da8;"></div>
<div class="a" style="left:1459px;top:58px;width:1px;height:383px;background:#2c333b;"></div>
<div class="a" style="left:1588px;top:64px;width:3px;height:358px;background:#434a53;border-radius:2px 0 0 2px"></div>
<div class="a" style="left:1588px;top:162px;width:3px;height:138.5px;background:#6a7079;border-radius:2px 0 0 2px"></div>
<div class="a" style="left:365px;top:430px;width:1215px;height:7px;background:#434a53;border-radius:4px"></div>
<div class="a" style="left:365px;top:430px;width:1201px;height:7px;background:#6a7079;border-radius:4px"></div>
<div class="a" style="left:361px;top:58px;width:36px;height:1px;background:#2d343c;"></div>
<div class="a" style="left:579px;top:58px;width:1012px;height:1px;background:#2d343c;"></div>
<div class="a" style="left:361px;top:439.5px;width:1230px;height:1.5px;background:#2b3139;"></div>
<svg class="a" style="left:369.1px;top:294.4px" width="16" height="24" viewBox="0 0 16 24"><g transform="translate(2 2)"><path d="M0 0L0 18.2L4.1 14.3L6.7 19.6L9.1 18.5L6.6 13.2L11.8 13.1Z" fill="#0a0a0a" stroke="#fff" stroke-width="1.15" stroke-linejoin="miter"/></g></svg>
<div class="a" style="left:0px;top:441px;width:1591px;height:6px;background:#c9ccd2;"></div>
<div class="a" style="left:0px;top:447px;width:1px;height:345px;background:#c9ccd2;"></div>
<div class="a" style="left:1px;top:447px;width:1590px;height:345px;background:#31373f;"></div>
<div class="a" style="left:1px;top:483px;width:245px;height:309px;background:#2f353e;"></div>
<div class="a" style="left:255px;top:483px;width:853px;height:309px;background:#2f353e;"></div>
<div class="a" style="left:1117px;top:483px;width:459px;height:309px;background:#2f353e;"></div>
<div class="a" style="left:0px;top:446px;width:1591px;height:1px;background:#d3d6da;"></div>
<div class="a" style="left:1px;top:447px;width:1590px;height:1px;background:#282d35;"></div>
<div class="a" style="left:6px;top:450px;width:240px;height:32px;background:#2b3139;"></div>
<div class="a" style="left:6px;top:482px;width:240px;height:1px;background:#292e35;"></div>
<div class="a" style="left:255px;top:450px;width:85px;height:32px;background:#2c3239;"></div>
<div class="a" style="left:346.5px;top:450.3px;width:97.5px;height:31.7px;background:#282d35;border-radius:2px 2px 0 0"></div>
<div class="a" style="left:255px;top:482px;width:853px;height:1px;background:#292e35;"></div>
<div class="a" style="left:1117px;top:450.3px;width:85px;height:31.7px;background:#282d35;border-radius:2px 2px 0 0"></div>
<div class="a" style="left:1117px;top:482px;width:459px;height:1px;background:#292e35;"></div>
<div class="a" style="left:1586px;top:475px;width:5px;height:317px;background:#454c55;"></div>
<div class="a" style="left:1586px;top:451px;width:5px;height:24px;background:#6b717a;border-radius:2px 0 0 0"></div>
<svg class="a" style="left:15px;top:457.3px" width="16" height="16" viewBox="0 0 16 16"><g transform="translate(8 8)" fill="#f2f2f2"><path d="M-1.5 -5.3L-0.7 -7.3H0.7L1.5 -5.3Z" transform="rotate(0)"/><path d="M-1.5 -5.3L-0.7 -7.3H0.7L1.5 -5.3Z" transform="rotate(45)"/><path d="M-1.5 -5.3L-0.7 -7.3H0.7L1.5 -5.3Z" transform="rotate(90)"/><path d="M-1.5 -5.3L-0.7 -7.3H0.7L1.5 -5.3Z" transform="rotate(135)"/><path d="M-1.5 -5.3L-0.7 -7.3H0.7L1.5 -5.3Z" transform="rotate(180)"/><path d="M-1.5 -5.3L-0.7 -7.3H0.7L1.5 -5.3Z" transform="rotate(225)"/><path d="M-1.5 -5.3L-0.7 -7.3H0.7L1.5 -5.3Z" transform="rotate(270)"/><path d="M-1.5 -5.3L-0.7 -7.3H0.7L1.5 -5.3Z" transform="rotate(315)"/><circle r="5.6"/></g><circle cx="8" cy="8" r="3.7" fill="#2b3139"/></svg>
<svg class="a" style="left:48px;top:458px" width="14" height="15" viewBox="0 0 14 15"><path d="M0.8 0.8V14.2L12 7.5Z" fill="#f2f2f2"/></svg>
<div class="a" style="left:78px;top:460px;width:10.5px;height:11px;background:#f2f2f2;"></div>
<svg class="a" style="left:108px;top:458px" width="14" height="15" viewBox="0 0 14 15"><rect x="0.6" y="1.2" width="2.4" height="12.6" fill="#f2f2f2"/><path d="M4.3 1.2V13.8L12 7.5Z" fill="#f2f2f2"/></svg>
<svg class="a" style="left:136px;top:460px" width="14" height="11" viewBox="0 0 14 11"><path d="M1 2.5L7 8.5L13 2.5" fill="none" stroke="#f2f2f2" stroke-width="1.5"/></svg>
<svg class="a" style="left:168px;top:458px" width="10" height="15" viewBox="0 0 10 15"><path d="M8 1.5L2.5 7.5L8 13.5" fill="none" stroke="#f2f2f2" stroke-width="1.5"/></svg>
<svg class="a" style="left:198px;top:458px" width="10" height="15" viewBox="0 0 10 15"><path d="M2 1.5L7.5 7.5L2 13.5" fill="none" stroke="#f2f2f2" stroke-width="1.5"/></svg>
<div class="a m" style="left:13.5px;top:493.98px;font-size:10.6px;line-height:10.6px;color:#aeb4bc;letter-spacing:-0.42px;">Paused</div>
<div class="a" style="left:17px;top:517.0px;width:11px;height:11px;border-radius:50%;background:#ff0000"></div>
<div class="a m" style="left:36.5px;top:517.78px;font-size:10.6px;line-height:10.6px;color:#aeb4bc;letter-spacing:-0.42px;">MyRouteBuilder.java</div>
<div class="a" style="left:163px;top:515.0px;width:28px;height:16px;background:#23282f;border-radius:3px"></div>
<div class="a m" style="left:171.5px;top:517.78px;font-size:10.6px;line-height:10.6px;color:#eef0f2;letter-spacing:-0.42px;">27</div>
<div class="a" style="left:17px;top:541.0px;width:11px;height:11px;border-radius:50%;background:#ff0000"></div>
<div class="a m" style="left:36.5px;top:541.78px;font-size:10.6px;line-height:10.6px;color:#aeb4bc;letter-spacing:-0.42px;">MyRouteBuilder.java</div>
<div class="a" style="left:163px;top:539.0px;width:28px;height:16px;background:#23282f;border-radius:3px"></div>
<div class="a m" style="left:171.5px;top:541.78px;font-size:10.6px;line-height:10.6px;color:#eef0f2;letter-spacing:-0.42px;">29</div>
<div class="a m" style="left:276px;top:461.08px;font-size:10.6px;line-height:10.6px;color:#aeb4bc;letter-spacing:-0.42px;">Console</div>
<div class="a m" style="left:368.5px;top:461.08px;font-size:10.6px;line-height:10.6px;color:#aeb4bc;letter-spacing:-0.42px;">Callstack</div>
<div class="a m" style="left:1132px;top:460.88px;font-size:10.6px;line-height:10.6px;color:#aeb4bc;letter-spacing:-0.42px;">Variables</div>
<svg class="a" style="left:267px;top:495px" width="10" height="7" viewBox="0 0 10 7"><path d="M1 1L5 5.5L9 1" fill="none" stroke="#4f5862" stroke-width="1.2"/></svg>
<div class="a m" style="left:287px;top:493.58px;font-size:10.6px;line-height:10.6px;color:#e4e7ea;letter-spacing:-0.42px;">Attach to Camel Debugger</div>
<div class="a" style="left:287px;top:511px;width:813px;height:24px;background:#384a5f;border-radius:3px"></div>
<div class="a m" style="left:293px;top:517.78px;font-size:10.6px;line-height:10.6px;color:#e8ebee;letter-spacing:-0.42px;">log1</div>
<div class="a m" style="left:747.5px;top:517.78px;font-size:10.6px;line-height:10.6px;color:#aeb4bc;letter-spacing:-0.42px;">MyRouteBuilder.java</div>
<div class="a" style="left:868px;top:515px;width:28px;height:16px;background:#23282f;border-radius:3px"></div>
<div class="a m" style="left:875.8px;top:517.78px;font-size:10.6px;line-height:10.6px;color:#eef0f2;letter-spacing:-0.42px;">27</div>
<svg class="a" style="left:1129.5px;top:495px" width="10" height="7" viewBox="0 0 10 7"><path d="M1 1L5 5.5L9 1" fill="none" stroke="#4f5862" stroke-width="1.2"/></svg>
<div class="a m" style="left:1148.5px;top:494.08px;font-size:10.6px;line-height:10.6px;color:#aeb4bc;letter-spacing:-0.42px;">Processor</div>
<div class="a m" style="left:1166.5px;top:517.58px;font-size:10.6px;line-height:10.6px;color:#aeb4bc;letter-spacing:-0.42px;">Camel Id <span style="color:#eef0f2">MyCoolCamel</span></div>
<div class="a m" style="left:1166.5px;top:541.58px;font-size:10.6px;line-height:10.6px;color:#aeb4bc;letter-spacing:-0.42px;">Processor Id <span style="color:#eef0f2">Processor</span></div>
<svg class="a" style="left:1131px;top:564px" width="7" height="12" viewBox="0 0 7 12"><path d="M1.5 1L5.5 6L1.5 11" fill="none" stroke="#4f5862" stroke-width="1.2"/></svg>
<div class="a m" style="left:1148.5px;top:566.08px;font-size:10.6px;line-height:10.6px;color:#aeb4bc;letter-spacing:-0.42px;">Endpoint</div>
<svg class="a" style="left:1131px;top:588px" width="7" height="12" viewBox="0 0 7 12"><path d="M1.5 1L5.5 6L1.5 11" fill="none" stroke="#4f5862" stroke-width="1.2"/></svg>
<div class="a m" style="left:1148.5px;top:590.08px;font-size:10.6px;line-height:10.6px;color:#aeb4bc;letter-spacing:-0.42px;">Message</div>
<svg class="a" style="left:1131px;top:612px" width="7" height="12" viewBox="0 0 7 12"><path d="M1.5 1L5.5 6L1.5 11" fill="none" stroke="#4f5862" stroke-width="1.2"/></svg>
<div class="a m" style="left:1148.5px;top:614.08px;font-size:10.6px;line-height:10.6px;color:#aeb4bc;letter-spacing:-0.42px;">Debugger</div>
<svg class="a" style="left:1131px;top:636px" width="7" height="12" viewBox="0 0 7 12"><path d="M1.5 1L5.5 6L1.5 11" fill="none" stroke="#4f5862" stroke-width="1.2"/></svg>
<div class="a m" style="left:1148.5px;top:638.08px;font-size:10.6px;line-height:10.6px;color:#aeb4bc;letter-spacing:-0.42px;">Exchange</div>
<div class="a" style="left:0px;top:792px;width:1591px;height:22px;background:#c8cbd1;"></div>
<div class="a" style="left:10px;top:803px;width:14px;height:12px;border:1.1px solid #6f7276;border-radius:1.5px"></div>
<div class="a" style="left:11px;top:804px;width:3.8px;height:11px;background:#7a7d82;"></div>
<div class="a s" style="left:35.5px;top:803.87px;font-size:11.5px;line-height:11.5px;color:#45484d;letter-spacing:0.21px">LSP-camel, jdtls, Line 28, Column 5</div>
<svg class="a" style="left:1313px;top:802px" width="10" height="12" viewBox="0 0 10 12"><path d="M2 1V12M2 8Q2 5 8 3M8 1V4" fill="none" stroke="#3e4146" stroke-width="1.3"/><circle cx="2" cy="1.6" r="1.4" fill="#3e4146"/><circle cx="8" cy="1.6" r="1.4" fill="#3e4146"/></svg>
<div class="a s" style="left:1327px;top:803.87px;font-size:11.5px;line-height:11.5px;color:#45484d;letter-spacing:0.21px">main</div>
<div class="a" style="left:1358.5px;top:803.4px;width:11.5px;height:14px;border:1px solid #7a7d82;border-radius:2.5px"></div>
<div class="a s" style="left:1360.8px;top:805.31px;font-size:10.5px;line-height:10.5px;color:#6b6e73;">8</div>
<div class="a s" style="left:1413.5px;top:803.87px;font-size:11.5px;line-height:11.5px;color:#45484d;letter-spacing:0.21px">Spaces: 4</div>
<div class="a s" style="left:1529px;top:803.87px;font-size:11.5px;line-height:11.5px;color:#45484d;letter-spacing:0.21px">Java</div>
</body></html>
